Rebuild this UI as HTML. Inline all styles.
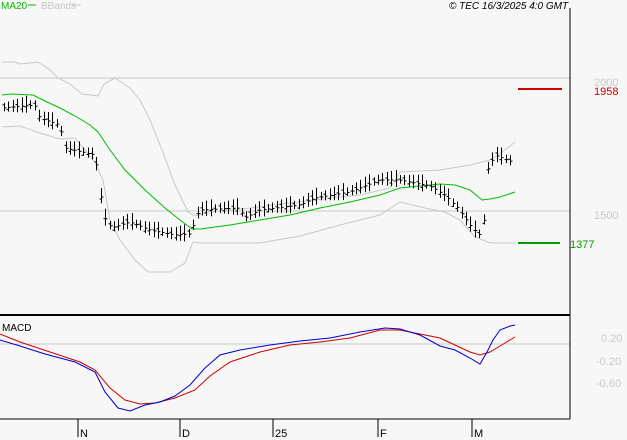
<!DOCTYPE html><html><head><style>
html,body{margin:0;padding:0;background:#f7f7f7;width:627px;height:440px;overflow:hidden;font-family:"Liberation Sans",sans-serif}
</style></head><body>
<svg id="s" width="627" height="440" xmlns="http://www.w3.org/2000/svg" style="position:absolute;left:0;top:0">
<rect width="627" height="440" fill="#f7f7f7"/>
<line x1="0" y1="78" x2="570" y2="78" stroke="#c8c8c8"/>
<line x1="0" y1="211" x2="570" y2="211" stroke="#c8c8c8"/>
<line x1="0" y1="344" x2="570" y2="344" stroke="#c8c8c8"/>
<line x1="570" y1="8" x2="570" y2="419" stroke="#000"/>
<line x1="0" y1="315" x2="570" y2="315" stroke="#000" stroke-width="2"/>
<line x1="0" y1="419" x2="570" y2="419" stroke="#000"/>
<g stroke="#000"><line x1="78" y1="419" x2="78" y2="437"/><line x1="180" y1="419" x2="180" y2="437"/><line x1="273" y1="419" x2="273" y2="437"/><line x1="378" y1="419" x2="378" y2="437"/><line x1="472" y1="419" x2="472" y2="437"/></g>
<g font-size="11" fill="#000"><text x="80" y="437">N</text><text x="182" y="437">D</text><text x="275" y="437">25</text><text x="380" y="437">F</text><text x="474" y="437">M</text></g>
<g font-size="11" fill="#c8c8c8"><text x="594" y="86">2000</text><text x="594" y="219">1500</text><text x="601" y="342">0.20</text><text x="596" y="365">-0.20</text><text x="596" y="387">-0.60</text></g>
<line x1="518" y1="89" x2="562" y2="89" stroke="#cc0000" stroke-width="2"/>
<text x="594" y="95" font-size="11" fill="#cc0000">1958</text>
<line x1="518" y1="243" x2="560" y2="243" stroke="#009900" stroke-width="2"/>
<text x="570" y="248" font-size="11" fill="#009900">1377</text>
<text x="1" y="9" font-size="10" fill="#00bb00">MA20</text><line x1="28" y1="5" x2="36" y2="5" stroke="#00bb00"/>
<text x="41" y="9" font-size="10" fill="#c8c8c8">BBands</text><line x1="72" y1="5" x2="81" y2="5" stroke="#c8c8c8"/>
<text x="449" y="9" font-size="10" font-style="italic" fill="#000">© TEC 16/3/2025 4:0 GMT</text>
<text x="2" y="331" font-size="10" fill="#000">MACD</text>
<polyline fill="none" stroke="#c8c8c8" points="2,62 15,62 20,64 38,62 50,70 58,78 70,84 82,94 98,96 104,84 115,78 130,88 140,100 150,120 162,150 175,185 188,212 195,216 210,212 250,208 290,203 330,198 360,195 390,188 400,172 440,170 470,165 490,160 505,150 515,142"/>
<polyline fill="none" stroke="#c8c8c8" points="2,127 20,126 40,133 60,139 75,138 95,162 103,180 110,220 120,240 135,260 148,272 170,272 185,263 193,242 200,243 260,243 300,236 340,225 380,215 400,202 425,208 445,212 460,220 475,237 490,243 515,243"/>
<polyline fill="none" stroke="#00bb00" points="2,95 12,94 33,95 45,101 60,108 75,116 90,125 98,132 110,150 125,170 145,190 165,208 180,220 192,229 200,229 230,225 260,220 290,215 320,208 350,202 380,195 400,188 420,186 440,184 455,185 470,190 482,200 490,199 500,197 515,192"/>
<g id="bars" stroke="#000" fill="none"></g>
<polyline fill="none" stroke="#cc0000" points="0,334 20,342 50,352 80,362 95,370 110,388 125,400 140,404 155,403 175,398 195,390 210,376 230,362 260,352 290,345 320,342 350,338 380,330 400,330 420,334 440,338 455,345 470,352 480,355 490,352 500,346 515,337"/>
<polyline fill="none" stroke="#0000cc" points="0,340 20,346 45,354 75,362 95,372 105,392 118,408 130,411 145,405 160,402 175,396 190,385 205,368 220,355 240,350 270,345 300,341 330,338 360,332 385,328 400,329 420,335 440,346 455,350 470,358 480,364 487,352 493,340 500,330 510,326 515,325"/>
</svg>
<script>
var pts=[[3,108],[35,105],[40,118],[60,125],[65,148],[95,155],[100,188],[105,218],[112,228],[130,222],[150,230],[175,235],[190,234],[200,210],[240,208],[245,218],[260,210],[300,205],[315,198],[350,192],[380,180],[400,180],[430,186],[445,195],[460,210],[470,225],[480,235],[484,230],[487,172],[495,155],[515,163]];
function y(x){for(var i=1;i<pts.length;i++){if(x<=pts[i][0]){var a=pts[i-1],b=pts[i];return a[1]+(b[1]-a[1])*(x-a[0])/(b[0]-a[0]);}}return 160;}
var g=document.getElementById('bars'),h='';
for(var x=4,k=0;x<=514;x+=4.4,k++){var X=Math.round(x)+0.5,c=y(X),r=5+((k*7)%6),o=c+(((k*5)%7)-3);
h+='<line x1="'+X+'" y1="'+(c-r)+'" x2="'+X+'" y2="'+(c+r*0.7)+'"/><line x1="'+(X-2)+'" y1="'+o+'" x2="'+X+'" y2="'+o+'"/><line x1="'+X+'" y1="'+c+'" x2="'+(X+2)+'" y2="'+c+'"/>';}
g.innerHTML=h;
</script>
</body></html>
